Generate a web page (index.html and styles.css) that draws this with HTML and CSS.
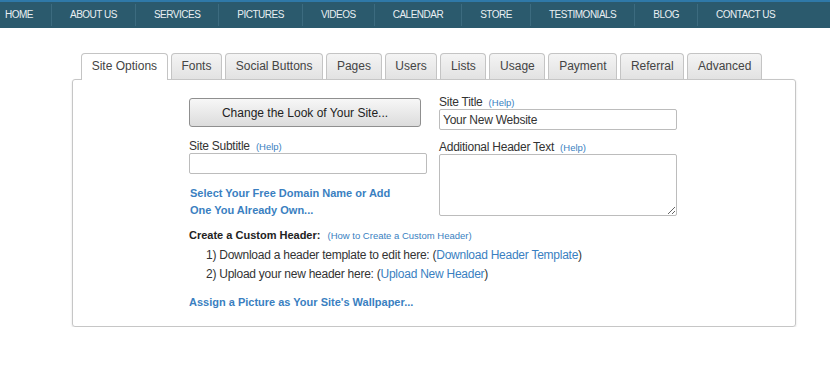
FILE: index.html
```html
<!DOCTYPE html>
<html>
<head>
    <title>Site Options</title>
    <link rel="stylesheet" href="styles.css">
</head>
<body>

<div class="nav">
    <a href="#" class="nav-item first">HOME</a>
    <a href="#" class="nav-item">ABOUT US</a>
    <a href="#" class="nav-item">SERVICES</a>
    <a href="#" class="nav-item">PICTURES</a>
    <a href="#" class="nav-item">VIDEOS</a>
    <a href="#" class="nav-item">CALENDAR</a>
    <a href="#" class="nav-item">STORE</a>
    <a href="#" class="nav-item">TESTIMONIALS</a>
    <a href="#" class="nav-item">BLOG</a>
    <a href="#" class="nav-item">CONTACT US</a>
</div>

<div class="options">
    <div class="tabs">
        <div class="tab active">Site Options</div>
        <div class="tab">Fonts</div>
        <div class="tab">Social Buttons</div>
        <div class="tab">Pages</div>
        <div class="tab">Users</div>
        <div class="tab">Lists</div>
        <div class="tab">Usage</div>
        <div class="tab">Payment</div>
        <div class="tab">Referral</div>
        <div class="tab">Advanced</div>
    </div>

    <div class="panel">
        <div class="form-grid">
            <div class="col">
                <button class="look-btn">Change the Look of Your Site...</button>
                <label class="field-label subtitle-label">Site Subtitle <a href="#" class="help">(Help)</a></label>
                <input type="text" class="field">
                <a href="#" class="strong-link domain-link">Select Your Free Domain Name or Add One You Already Own...</a>
            </div>
            <div class="col">
                <label class="field-label">Site Title <a href="#" class="help">(Help)</a></label>
                <input type="text" class="field" value="Your New Website">
                <label class="field-label header-label">Additional Header Text <a href="#" class="help">(Help)</a></label>
                <textarea class="field area"></textarea>
            </div>
        </div>

        <div class="custom-header">
            Create a Custom Header: <a href="#" class="help">(How to Create a Custom Header)</a>
        </div>
        <ol class="steps">
            <li>1) Download a header template to edit here: (<a href="#">Download Header Template</a>)</li>
            <li>2) Upload your new header here: (<a href="#">Upload New Header</a>)</li>
        </ol>

        <a href="#" class="strong-link wallpaper-link">Assign a Picture as Your Site's Wallpaper...</a>
    </div>
</div>

</body>
</html>
```

FILE: styles.css
```css
body {
    font-family: "Liberation Sans", Arial, sans-serif;
    font-size: 12px;
    color: #333;
    margin: 0;
    padding: 0;
    background: white;
}
a {
    color: #3a7fc1;
    text-decoration: none;
}
.nav {
    display: flex;
    height: 26px;
    align-items: center;
    background: #2b5a6d;
    border-top: 2px solid #2f79a8;
}
.nav-item {
    color: #e9eff2;
    font-size: 10px;
    letter-spacing: -0.5px;
    padding: 0 18px;
    line-height: 22px;
    border-left: 1px solid #3c6b7f;
}
.nav-item.first {
    padding-left: 5px;
    border-left: none;
}
.options {
    margin: 25px 0 0 72px;
    width: 724px;
}
.tabs {
    display: flex;
    gap: 3px;
    padding-left: 9px;
    margin-bottom: -1px;
}
.tab {
    height: 25px;
    line-height: 25px;
    padding: 0 9.7px;
    border: 1px solid #c4c4c4;
    border-bottom: none;
    border-radius: 4px 4px 0 0;
    background: linear-gradient(#f4f4f4, #e2e2e2);
    color: #444;
    position: relative;
}
.tab.active {
    background: white;
    height: 26px;
    z-index: 1;
}
.panel {
    border: 1px solid #c6c6c6;
    border-radius: 3px;
    box-shadow: 0 1px 2px rgba(0,0,0,0.15);
    padding: 16px 0 15px 116px;
    letter-spacing: -0.25px;
}
.form-grid {
    display: grid;
    grid-template-columns: 238px 238px;
    gap: 12px;
}
.col {
    display: flex;
    flex-direction: column;
}
.look-btn {
    margin-top: 2px;
    width: 232px;
    height: 29px;
    font-family: inherit;
    font-size: 12px;
    color: #222;
    border: 1px solid #8f8f8f;
    border-radius: 3px;
    background: linear-gradient(#f7f7f7, #dcdcdc);
    cursor: pointer;
}
.field-label {
    display: block;
    height: 13px;
    line-height: 13px;
    color: #333;
}
.subtitle-label {
    margin-top: 13px;
}
.header-label {
    margin-top: 11px;
}
.help {
    font-size: 9.5px;
    margin-left: 3px;
    letter-spacing: 0;
}
.field {
    box-sizing: border-box;
    height: 21px;
    border: 1px solid #bcbcbc;
    border-radius: 2px;
    font-family: inherit;
    font-size: 12px;
    letter-spacing: -0.25px;
    color: #333;
    padding: 0 3px;
    margin: 0;
}
.area {
    height: 62px;
    resize: vertical;
}
.strong-link {
    font-size: 11px;
    font-weight: bold;
    letter-spacing: 0;
    display: block;
    line-height: 17px;
}
.domain-link {
    margin-top: 11px;
    padding-left: 1px;
    width: 210px;
}
.custom-header {
    font-size: 11px;
    font-weight: bold;
    letter-spacing: 0;
    line-height: 17px;
    margin-top: 8px;
    color: #222;
}
.custom-header .help {
    font-weight: normal;
    font-size: 9.5px;
    margin-left: 4px;
}
.steps {
    list-style: none;
    margin: 2px 0 0 0;
    padding-left: 17px;
}
.steps li {
    line-height: 19px;
}
.wallpaper-link {
    margin-top: 10px;
}
```
